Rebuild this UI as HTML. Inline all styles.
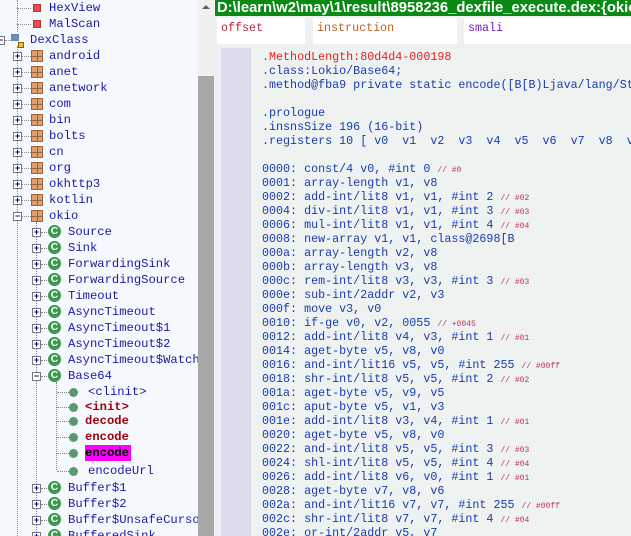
<!DOCTYPE html>
<html><head><meta charset="utf-8"><style>
*{margin:0;padding:0;box-sizing:border-box}
html,body{width:631px;height:536px;overflow:hidden}
body{background:#f0f0f0;position:relative;font-family:"Liberation Mono",monospace}
#tree{position:absolute;left:0;top:0;width:198px;height:536px;background:#f5f9fd;overflow:hidden}
.r{position:absolute;height:16px;line-height:16px;font-size:12.2px;color:#1a1aa8;white-space:nowrap}
.pm{position:absolute;width:9px;height:9px;border:1px solid #777;background:#fff;font:bold 9px/7px "Liberation Sans";color:#0000aa;text-align:center}
.pkg{position:absolute;width:12px;height:12px;background:#d9a070;border:1px solid #a0603a;background-image:linear-gradient(#a0603a,#a0603a),linear-gradient(#a0603a,#a0603a);background-size:1px 100%,100% 1px;background-position:4.5px 0,0 4.5px;background-repeat:no-repeat}
.cls{position:absolute;width:13px;height:13px;border-radius:50%;background:#3a9a4a;color:#fff;font:bold 10px/13px "Liberation Sans";text-align:center}
.dot{position:absolute;width:9px;height:9px;border-radius:50%;background:#5a9a6a}
.hl{position:absolute;border-top:1px dotted #888}
.vl{position:absolute;border-left:1px dotted #888}
#sb{position:absolute;left:198px;top:0;width:16px;height:536px;background:#f0f0f0}
#thumb{position:absolute;left:198px;top:76px;width:16px;height:460px;background:#a8a8a8}
#title{position:absolute;left:215px;top:0;width:416px;height:16px;background:#0a8a14;color:#fff;font:bold 14.8px/16px "Liberation Sans",sans-serif;white-space:nowrap;overflow:hidden;padding-left:2px}
.hd{position:absolute;top:18px;height:26px;background:#fff;font-size:11.7px;line-height:20px;padding-left:4px}
#code{position:absolute;left:219px;top:48px;width:412px;height:488px;background:#eef3f1}
#gut{position:absolute;left:221px;top:48px;width:30px;height:488px;background:#dcdcee}
#lines{position:absolute;left:262px;top:50px;width:369px;height:486px;overflow:hidden;font-size:11.7px;line-height:14px;color:#1a3ab0;white-space:pre}
.c{color:#c03060;font-size:8px;line-height:0}
.red{color:#e82020}
</style></head><body>
<div id="tree">
<div class="vl" style="left:17px;top:0;height:32px"></div>
<div class="hl" style="left:17px;top:8px;width:14px"></div><div style="position:absolute;left:33px;top:4px;width:8px;height:8px;background:#e05050;border:1px solid #c03030"></div><div class="r" style="left:49px;top:0">HexView</div>
<div class="hl" style="left:17px;top:24px;width:14px"></div><div style="position:absolute;left:33px;top:20px;width:8px;height:8px;background:#e05050;border:1px solid #c03030"></div><div class="r" style="left:49px;top:16px">MalScan</div>
<div class="pm" style="left:-4px;top:36px">−</div><div class="hl" style="left:5px;top:40px;width:6px"></div>
<div style="position:absolute;left:11px;top:34px;width:8px;height:7px;background:#6a8ab0"></div><div style="position:absolute;left:18px;top:42px;width:6px;height:6px;background:#f0c030;border:1px solid #906000"></div>
<div class="r" style="left:30px;top:32px">DexClass</div>
<div class="vl" style="left:17px;top:46px;height:490px"></div>
<div class="vl" style="left:36px;top:222px;height:314px"></div>
<div class="vl" style="left:56px;top:382px;height:88px"></div>
<script>
var t=document.getElementById('tree');var h='';
var pk=['android','anet','anetwork','com','bin','bolts','cn','org','okhttp3','kotlin','okio'];
pk.forEach(function(n,i){var y=48+i*16;h+='<div class="pm" style="left:13px;top:'+(y+4)+'px">'+(n=='okio'?'−':'+')+'</div><div class="hl" style="left:22px;top:'+(y+8)+'px;width:9px"></div><div class="pkg" style="left:31px;top:'+(y+2)+'px"></div><div class="r" style="left:49px;top:'+y+'px">'+n+'</div>';});
var cl=['Source','Sink','ForwardingSink','ForwardingSource','Timeout','AsyncTimeout','AsyncTimeout$1','AsyncTimeout$2','AsyncTimeout$WatchDog','Base64'];
cl.forEach(function(n,i){var y=224+i*16;h+='<div class="pm" style="left:32px;top:'+(y+4)+'px">'+(n=='Base64'?'−':'+')+'</div><div class="hl" style="left:41px;top:'+(y+8)+'px;width:8px"></div><div class="cls" style="left:48px;top:'+(y+1)+'px">C</div><div class="r" style="left:68px;top:'+y+'px">'+n+'</div>';});
var m=[['&lt;clinit&gt;',392,'#1a1aa8','',88],['&lt;init&gt;',407,'#a00010','bold',85],['decode',421,'#a00010','bold',85],['encode',437,'#a00010','bold',85],['encode',453,'#000','bold;background:#ff00ff;padding-right:2px',85],['encodeUrl',471,'#1a1aa8','',88]];
m.forEach(function(a){h+='<div class="hl" style="left:57px;top:'+a[1]+'px;width:12px"></div><div class="dot" style="left:69px;top:'+(a[1]-4)+'px"></div><div class="r" style="left:'+a[4]+'px;top:'+(a[1]-8)+'px;color:'+a[2]+';font-weight:'+(a[3]||'normal')+'">'+a[0]+'</div>';});
['Buffer$1','Buffer$2','Buffer$UnsafeCursor','BufferedSink'].forEach(function(n,i){var y=480+i*16;h+='<div class="pm" style="left:32px;top:'+(y+4)+'px">+</div><div class="hl" style="left:41px;top:'+(y+8)+'px;width:8px"></div><div class="cls" style="left:48px;top:'+(y+1)+'px">C</div><div class="r" style="left:68px;top:'+y+'px">'+n+'</div>';});
t.insertAdjacentHTML('beforeend',h);
</script>
</div>
<div id="sb"><div style="position:absolute;left:4px;top:5px;width:0;height:0;border-left:4px solid transparent;border-right:4px solid transparent;border-bottom:4px solid #606060"></div></div>
<div id="thumb"></div>
<div id="title">D:\learn\w2\may\1\result\8958236_dexfile_execute.dex:{okio.Base64}</div>
<div class="hd" style="left:217px;width:88px;color:#c02040">offset</div>
<div class="hd" style="left:313px;width:144px;color:#c06020">instruction</div>
<div class="hd" style="left:464px;width:167px;color:#7020c0">smali</div>
<div id="code"></div><div id="gut"></div>
<div id="lines"><span class="red">.MethodLength:80d4d4-000198</span>
.class:Lokio/Base64;
.method@fba9 private static encode([B[B)Ljava/lang/String;

.prologue
.insnsSize 196 (16-bit)
.registers 10 [ v0  v1  v2  v3  v4  v5  v6  v7  v8  v9 ]

0000: const/4 v0, #int 0 <span class="c">// #0</span>
0001: array-length v1, v8
0002: add-int/lit8 v1, v1, #int 2 <span class="c">// #02</span>
0004: div-int/lit8 v1, v1, #int 3 <span class="c">// #03</span>
0006: mul-int/lit8 v1, v1, #int 4 <span class="c">// #04</span>
0008: new-array v1, v1, class@2698[B
000a: array-length v2, v8
000b: array-length v3, v8
000c: rem-int/lit8 v3, v3, #int 3 <span class="c">// #03</span>
000e: sub-int/2addr v2, v3
000f: move v3, v0
0010: if-ge v0, v2, 0055 <span class="c">// +0045</span>
0012: add-int/lit8 v4, v3, #int 1 <span class="c">// #01</span>
0014: aget-byte v5, v8, v0
0016: and-int/lit16 v5, v5, #int 255 <span class="c">// #00ff</span>
0018: shr-int/lit8 v5, v5, #int 2 <span class="c">// #02</span>
001a: aget-byte v5, v9, v5
001c: aput-byte v5, v1, v3
001e: add-int/lit8 v3, v4, #int 1 <span class="c">// #01</span>
0020: aget-byte v5, v8, v0
0022: and-int/lit8 v5, v5, #int 3 <span class="c">// #03</span>
0024: shl-int/lit8 v5, v5, #int 4 <span class="c">// #04</span>
0026: add-int/lit8 v6, v0, #int 1 <span class="c">// #01</span>
0028: aget-byte v7, v8, v6
002a: and-int/lit16 v7, v7, #int 255 <span class="c">// #00ff</span>
002c: shr-int/lit8 v7, v7, #int 4 <span class="c">// #04</span>
002e: or-int/2addr v5, v7</div>
</body></html>
